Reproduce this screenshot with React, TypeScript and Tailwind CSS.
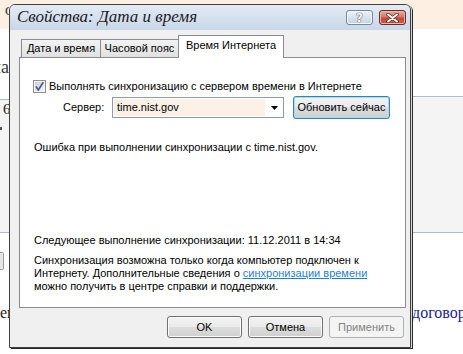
import React from "react";

const UI: React.CSSProperties = { fontFamily: '"Liberation Sans", "DejaVu Sans", sans-serif' };
const SERIF: React.CSSProperties = { fontFamily: '"Liberation Serif", "DejaVu Serif", serif' };

function WinButton({ label, kind = "normal", className = "" }: { label: string; kind?: "normal" | "default" | "disabled"; className?: string }) {
  const base = "h-[22px] rounded-[3px] border flex items-center justify-center text-[11px] leading-[13px] whitespace-nowrap";
  const styles =
    kind === "default"
      ? "border-[#3c7fb1] bg-[linear-gradient(#f2f2f2,#ebebeb_50%,#dddddd_50%,#cfcfcf)] shadow-[inset_0_0_0_1px_#9fe1f7] text-black"
      : kind === "disabled"
      ? "border-[#adb2b5] bg-[#f4f4f4] text-[#838383]"
      : "border-[#707070] bg-[linear-gradient(#f2f2f2,#ebebeb_50%,#dddddd_50%,#cfcfcf)] shadow-[inset_0_0_0_1px_#fbfbfb] text-black";
  return <div className={`${base} ${styles} ${className}`}>{label}</div>;
}

function Checkbox() {
  return (
    <svg width="13" height="13" viewBox="0 0 13 13" className="shrink-0">
      <defs>
        <linearGradient id="cbg" x1="0" y1="0" x2="1" y2="1">
          <stop offset="0" stopColor="#cbcfd5" />
          <stop offset="1" stopColor="#f6f6f6" />
        </linearGradient>
      </defs>
      <rect x="0.5" y="0.5" width="12" height="12" fill="#f4f4f4" stroke="#8e8f8f" />
      <rect x="2" y="2" width="9" height="9" fill="url(#cbg)" />
      <path d="M3 6.5 L5.3 10 L10.3 2.2" stroke="#4b5c9a" strokeWidth="1.7" fill="none" strokeLinejoin="round" />
    </svg>
  );
}

function Background() {
  return (
    <div className="flex h-full" style={SERIF}>
      <div className="w-[9px] shrink-0 flex flex-col overflow-hidden">
        <div className="h-[29px] shrink-0 bg-[#fdefe2] pt-[4px] pl-[5px] text-[13px] leading-[13px] text-[#333]">С</div>
        <div className="h-[70px] shrink-0 pt-[29px] text-[18px] leading-[18px] text-[#3a3a3a] whitespace-nowrap">
          <span className="-ml-[8px] inline-block">ла</span>
        </div>
        <div className="h-[134px] shrink-0 border-t border-b border-[#a8bdd3] bg-[#f4f4f4] flex flex-col">
          <div className="pl-[3px] pt-[2px] text-[15px] leading-[15px] text-[#222]">6</div>
          <div className="mt-[10px] w-[2px] h-[3px] bg-[#555]" />
        </div>
        <div className="flex-1 flex flex-col">
          <div className="mt-[19px] w-[4px] h-[18px] border border-l-0 border-[#9a9a9a] bg-[#e6e6e6] rounded-r-[2px]" />
          <div className="mt-[35px] text-[16px] leading-[16px] text-[#222] whitespace-nowrap">ен</div>
        </div>
      </div>
      <div className="flex-1 flex flex-col">
        <div className="h-[29px] bg-[#fdefe2]" />
      </div>
      <div className="w-[50px] shrink-0 flex flex-col overflow-hidden">
        <div className="h-[29px] shrink-0 bg-[#fdefe2]" />
        <div className="h-[67px] shrink-0" />
        <div className="h-[137px] shrink-0 border-t border-b border-[#a8bdd3] bg-[#f4f4f4]" />
        <div className="pt-[72px] text-[16px] leading-[16px] text-[#1c1c8c] underline whitespace-nowrap">
          <span className="-ml-[1px] inline-block">договор</span>
        </div>
      </div>
    </div>
  );
}

function TitleBar() {
  return (
    <div className="h-[25px] shrink-0 rounded-t-[5px] bg-linear-to-b from-[#e3ebf5] to-[#c9d7e9] flex items-start pl-[7px] pr-[4px]">
      <div className="mt-[3px] text-[17px] leading-[18px] italic text-[#1b1b1b] whitespace-nowrap" style={SERIF}>
        Свойства: Дата и время
      </div>
      <div className="flex-1" />
      <div className="mt-[5px] flex gap-[6px]">
        <div className="w-[27px] h-[15px] rounded-[3px] border border-[#76879b] bg-linear-to-b from-[#eef3f9] to-[#c3d2e3] shadow-[inset_0_0_0_1px_#f4f7fb] flex items-center justify-center">
          <span className="text-[12px] leading-[12px] font-bold text-white [text-shadow:0_0_1px_#3b3b3b,0_0_1px_#3b3b3b]" style={{ fontFamily: '"DejaVu Sans", sans-serif' }}>?</span>
        </div>
        <div className="w-[27px] h-[15px] rounded-[3px] border border-[#6a2c24] bg-[linear-gradient(#e9a99c,#d47a6b_45%,#c2473a_55%,#cb5d4b)] shadow-[inset_0_0_0_1px_#eeb4a8] flex items-center justify-center">
          <svg width="13" height="10" viewBox="0 0 13 10">
            <path d="M2 1.5 L11 8.5 M11 1.5 L2 8.5" stroke="#4a2a26" strokeWidth="3.4" strokeLinecap="round" />
            <path d="M2 1.5 L11 8.5 M11 1.5 L2 8.5" stroke="#ffffff" strokeWidth="2" strokeLinecap="round" />
          </svg>
        </div>
      </div>
    </div>
  );
}

function Tabs() {
  return (
    <div className="flex h-[22px] items-start pl-[2px] text-[11px] text-black">
      <div className="mt-[4px] w-[80px] h-[18px] border border-b-0 border-[#898c95] bg-linear-to-b from-[#f3f3f3] to-[#e1e1e1] flex items-center justify-center whitespace-nowrap leading-[13px]">
        Дата и время
      </div>
      <div className="-ml-[1px] mt-[4px] w-[79px] h-[18px] border border-b-0 border-[#898c95] bg-linear-to-b from-[#f3f3f3] to-[#e1e1e1] flex items-center justify-center whitespace-nowrap leading-[13px]">
        Часовой пояс
      </div>
      <div className="relative z-10 -ml-[1px] w-[106px] h-[23px] border border-b-0 border-[#898c95] bg-white flex justify-center pt-[3px] leading-[13px] whitespace-nowrap">
        Время Интернета
      </div>
    </div>
  );
}

function Panel() {
  return (
    <div className="h-[251px] shrink-0 border border-[#898c95] bg-white flex flex-col pl-[13px] text-[11px] leading-[13px] text-black">
      <div className="mt-[22px] h-[13px] flex items-center gap-[3px] whitespace-nowrap">
        <Checkbox />
        <span>Выполнять синхронизацию с сервером времени в Интернете</span>
      </div>
      <div className="mt-[3px] h-[23px] flex items-center">
        <div className="ml-[30px] w-[49px] whitespace-nowrap">Сервер:</div>
        <div className="w-[172px] h-[21px] border border-[#8a9bb0] flex bg-white">
          <div className="flex-1 m-[1px] bg-[#fdf0e5] flex items-center pl-[3px]">time.nist.gov</div>
          <div className="w-[17px] flex items-center justify-center">
            <svg width="7" height="4" viewBox="0 0 7 4">
              <path d="M0 0 H7 L3.5 4 Z" fill="#000" />
            </svg>
          </div>
        </div>
        <WinButton label="Обновить сейчас" kind="default" className="ml-[9px] w-[97px] h-[23px]" />
      </div>
      <div className="mt-[22px] ml-[1px] whitespace-nowrap">Ошибка при выполнении синхронизации с time.nist.gov.</div>
      <div className="mt-[80px] ml-[1px] whitespace-nowrap">Следующее выполнение синхронизации: 11.12.2011 в 14:34</div>
      <div className="mt-[7px] ml-[1px] flex flex-col whitespace-nowrap">
        <span>Синхронизация возможна только когда компьютер подключен к</span>
        <span>
          Интернету. Дополнительные сведения о <span className="text-[#1f7fd6] underline">синхронизации времени</span>
        </span>
        <span>можно получить в центре справки и поддержки.</span>
      </div>
    </div>
  );
}

function Dialog() {
  return (
    <div
      className="absolute left-[9px] top-[4px] w-[402px] h-[344px] flex flex-col border border-[#404040] rounded-t-[6px] bg-[#f0f0f0] shadow-[1px_0_0_#d8d8d8,2px_1px_0_#2a2a2a]"
      style={UI}
    >
      <TitleBar />
      <div className="flex-1 flex flex-col pt-[5px] pl-[9px] pr-[4px]">
        <Tabs />
        <Panel />
        <div className="mt-[8px] flex justify-end gap-[6px] pr-[2px]">
          <WinButton label="OK" className="w-[75px]" />
          <WinButton label="Отмена" className="w-[75px]" />
          <WinButton label="Применить" kind="disabled" className="w-[75px]" />
        </div>
      </div>
    </div>
  );
}

export default function App() {
  return (
    <div className="relative w-[463px] h-[354px] overflow-hidden bg-white">
      <Background />
      <Dialog />
    </div>
  );
}
